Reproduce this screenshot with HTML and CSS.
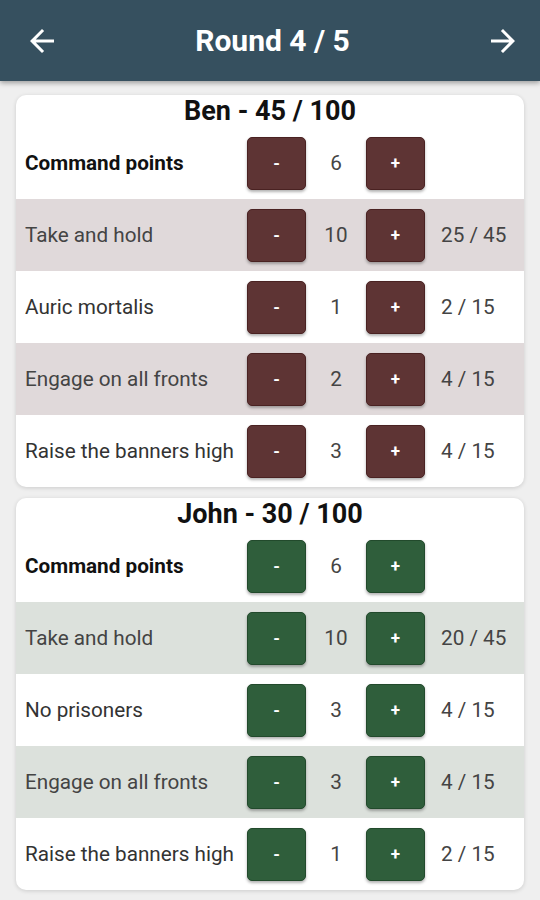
FILE: index.html
```html
<!DOCTYPE html>
<html>
<head>
<meta charset="utf-8">
<link rel="stylesheet" href="styles.css">
</head>
<body>
<header class="appbar">
  <button class="nav-btn" aria-label="Back">
    <svg viewBox="0 0 24 24" width="36" height="36"><path d="M20 11H7.83l5.59-5.59L12 4l-8 8 8 8 1.41-1.41L7.83 13H20v-2z" fill="#fff"/></svg>
  </button>
  <h1 class="title">Round 4 / 5</h1>
  <button class="nav-btn" aria-label="Forward">
    <svg viewBox="0 0 24 24" width="36" height="36"><path d="M12 4l-1.41 1.41L16.17 11H4v2h12.17l-5.58 5.59L12 20l8-8z" fill="#fff"/></svg>
  </button>
</header>
<main class="content">
  <section class="card red">
    <h2 class="card-title">Ben - 45 / 100</h2>
    <div class="row"><span class="label strong">Command points</span><span class="btn">-</span><span class="val">6</span><span class="btn">+</span><span class="score"></span></div>
    <div class="row alt"><span class="label">Take and hold</span><span class="btn">-</span><span class="val">10</span><span class="btn">+</span><span class="score">25 / 45</span></div>
    <div class="row"><span class="label">Auric mortalis</span><span class="btn">-</span><span class="val">1</span><span class="btn">+</span><span class="score">2 / 15</span></div>
    <div class="row alt"><span class="label">Engage on all fronts</span><span class="btn">-</span><span class="val">2</span><span class="btn">+</span><span class="score">4 / 15</span></div>
    <div class="row"><span class="label">Raise the banners high</span><span class="btn">-</span><span class="val">3</span><span class="btn">+</span><span class="score">4 / 15</span></div>
  </section>
  <section class="card green">
    <h2 class="card-title">John - 30 / 100</h2>
    <div class="row"><span class="label strong">Command points</span><span class="btn">-</span><span class="val">6</span><span class="btn">+</span><span class="score"></span></div>
    <div class="row alt"><span class="label">Take and hold</span><span class="btn">-</span><span class="val">10</span><span class="btn">+</span><span class="score">20 / 45</span></div>
    <div class="row"><span class="label">No prisoners</span><span class="btn">-</span><span class="val">3</span><span class="btn">+</span><span class="score">4 / 15</span></div>
    <div class="row alt"><span class="label">Engage on all fronts</span><span class="btn">-</span><span class="val">3</span><span class="btn">+</span><span class="score">4 / 15</span></div>
    <div class="row"><span class="label">Raise the banners high</span><span class="btn">-</span><span class="val">1</span><span class="btn">+</span><span class="score">2 / 15</span></div>
  </section>
</main>
</body>
</html>
```
FILE: styles.css
```css
* { box-sizing: border-box; }
html, body { margin: 0; padding: 0; }
body {
  background: #efefef;
  font-family: Roboto, "Noto Sans", sans-serif;
  width: 540px;
  height: 900px;
  overflow: hidden;
}
.appbar {
  height: 81px;
  background: #36505f;
  display: flex;
  align-items: center;
  justify-content: space-between;
  padding: 0 19px 0 24px;
  box-shadow: 0 2px 5px rgba(0,0,0,0.35);
  position: relative;
  z-index: 1;
}
.nav-btn {
  background: none;
  border: none;
  padding: 0;
  width: 36px;
  height: 36px;
  display: flex;
}
.title {
  margin: 0;
  color: #fff;
  font-size: 30px;
  font-weight: 700;
}
.content {
  padding: 14px 16px 0;
  display: flex;
  flex-direction: column;
  gap: 11px;
}
.card {
  background: #fff;
  border-radius: 10px;
  overflow: hidden;
  box-shadow: 0 1px 4px rgba(0,0,0,0.15);
}
.card-title {
  margin: 0;
  height: 32px;
  line-height: 32px;
  text-align: center;
  font-size: 27px;
  font-weight: 700;
  color: #111;
}
.row {
  height: 72px;
  display: grid;
  grid-template-columns: 222px 59px 60px 59px auto;
  align-items: center;
  padding-left: 9px;
}
.red .row.alt { background: #e0d9da; }
.green .row.alt { background: #dce1dc; }
.label {
  font-size: 20.7px;
  color: #333;
  white-space: nowrap;
}
.row.alt .label { color: #444; }
.label.strong { font-weight: 700; color: #111; }
.btn {
  height: 53px;
  border-radius: 5px;
  display: flex;
  align-items: center;
  justify-content: center;
  color: #fff;
  font-weight: 700;
  font-size: 17px;
  box-shadow: 0 2px 3px rgba(0,0,0,0.3);
}
.red .btn { background: #5e3434; border: 1px solid #4a2222; }
.green .btn { background: #2f5e3b; border: 1px solid #224a2c; }
.val {
  text-align: center;
  font-size: 20.7px;
  color: #444;
}
.score {
  padding-left: 16px;
  font-size: 20.7px;
  color: #444;
  white-space: nowrap;
}
```
